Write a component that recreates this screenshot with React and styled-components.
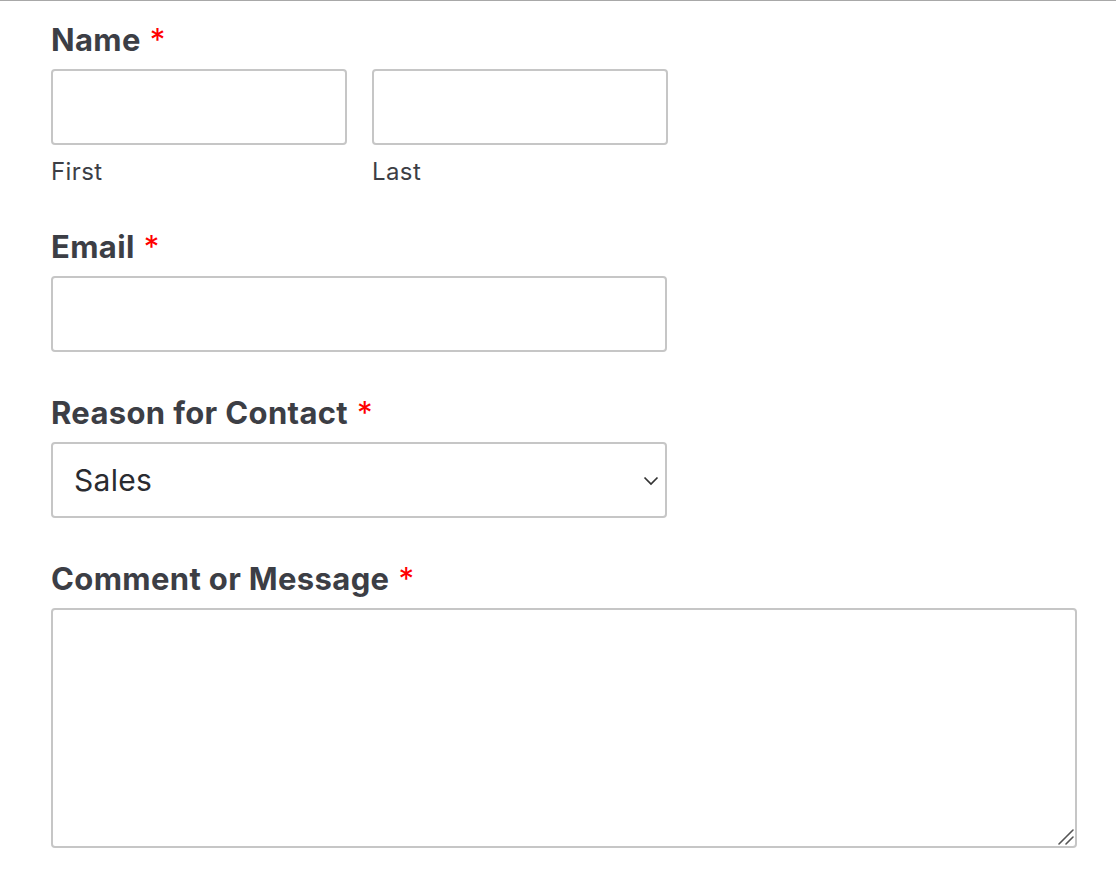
import styled, { createGlobalStyle } from 'styled-components';

const GlobalStyle = createGlobalStyle`
    html, body {
        margin: 0;
        padding: 0;
        background: #fff;
    }
    body {
        font-family: Inter, "Noto Sans", "Liberation Sans", sans-serif;
        color: #3c3e45;
    }
`;

const Page = styled.div`
    border-top: 1px solid #a8a8a8;
    padding: 21px 0 40px 51px;
    min-height: 824px;
`;

const Form = styled.form`
    display: flex;
    flex-direction: column;
    gap: 43px;
`;

const Field = styled.div`
    display: flex;
    flex-direction: column;
`;

const Label = styled.label`
    display: block;
    font-size: 31px;
    line-height: 36px;
    font-weight: 700;
    letter-spacing: 0.35px;
    color: #3c3e45;
    margin-bottom: 11px;
`;

const Required = styled.span`
    color: #ff0000;
    font-weight: 400;
    margin-left: 9px;
`;

const Row = styled.div`
    display: flex;
    gap: 25px;
`;

const Column = styled.div`
    display: flex;
    flex-direction: column;
`;

const Input = styled.input`
    box-sizing: border-box;
    width: ${p => p.$width || 616}px;
    height: 76px;
    border: 2px solid #c6c6c6;
    border-radius: 4px;
    background: #fff;
    padding: 0 20px;
    font-family: inherit;
    font-size: 30px;
    color: #3c3e45;
    outline: none;
`;

const Sublabel = styled.span`
    font-size: 24px;
    line-height: 29px;
    letter-spacing: 0.4px;
    color: #3c3e45;
    margin-top: 12px;
`;

const SelectWrap = styled.div`
    position: relative;
    width: 616px;
`;

const Select = styled.select`
    display: block;
    box-sizing: border-box;
    appearance: none;
    width: 616px;
    height: 76px;
    border: 2px solid #c6c6c6;
    border-radius: 4px;
    background: #fff;
    padding: 0 21px;
    font-family: inherit;
    font-size: 30px;
    letter-spacing: 0.3px;
    color: #2a2b30;
    outline: none;
`;

const Chevron = styled.svg`
    position: absolute;
    right: 8px;
    top: 34px;
    pointer-events: none;
`;

const AreaWrap = styled.div`
    position: relative;
    width: 1026px;
    height: 240px;
`;

const TextArea = styled.textarea`
    display: block;
    box-sizing: border-box;
    width: 1026px;
    height: 240px;
    border: 2px solid #c6c6c6;
    border-radius: 4px;
    background: #fff;
    padding: 16px 20px;
    font-family: inherit;
    font-size: 30px;
    color: #3c3e45;
    resize: none;
    outline: none;
`;

const Grip = styled.svg`
    position: absolute;
    right: 3px;
    bottom: 3px;
    pointer-events: none;
`;

const App = () => {
    return (
        <>
            <GlobalStyle />
            <Page>
                <Form onSubmit={e => e.preventDefault()}>
                    <Field>
                        <Label>Name<Required>*</Required></Label>
                        <Row>
                            <Column>
                                <Input $width={296} />
                                <Sublabel>First</Sublabel>
                            </Column>
                            <Column>
                                <Input $width={296} />
                                <Sublabel>Last</Sublabel>
                            </Column>
                        </Row>
                    </Field>
                    <Field>
                        <Label>Email<Required>*</Required></Label>
                        <Input type="email" />
                    </Field>
                    <Field>
                        <Label>Reason for Contact<Required>*</Required></Label>
                        <SelectWrap>
                            <Select defaultValue="Sales">
                                <option>Sales</option>
                                <option>Support</option>
                                <option>Other</option>
                            </Select>
                            <Chevron width="16" height="10" viewBox="0 0 16 10">
                                <path d="M1.5 1.5 L8 8 L14.5 1.5" fill="none" stroke="#333" strokeWidth="1.7" />
                            </Chevron>
                        </SelectWrap>
                    </Field>
                    <Field>
                        <Label>Comment or Message<Required>*</Required></Label>
                        <AreaWrap>
                            <TextArea />
                            <Grip width="16" height="16" viewBox="0 0 16 16">
                                <path d="M1 15 L15 1 M8 15 L15 8" fill="none" stroke="#555" strokeWidth="1.6" strokeLinecap="round" />
                            </Grip>
                        </AreaWrap>
                    </Field>
                </Form>
            </Page>
        </>
    );
};

export default App;
